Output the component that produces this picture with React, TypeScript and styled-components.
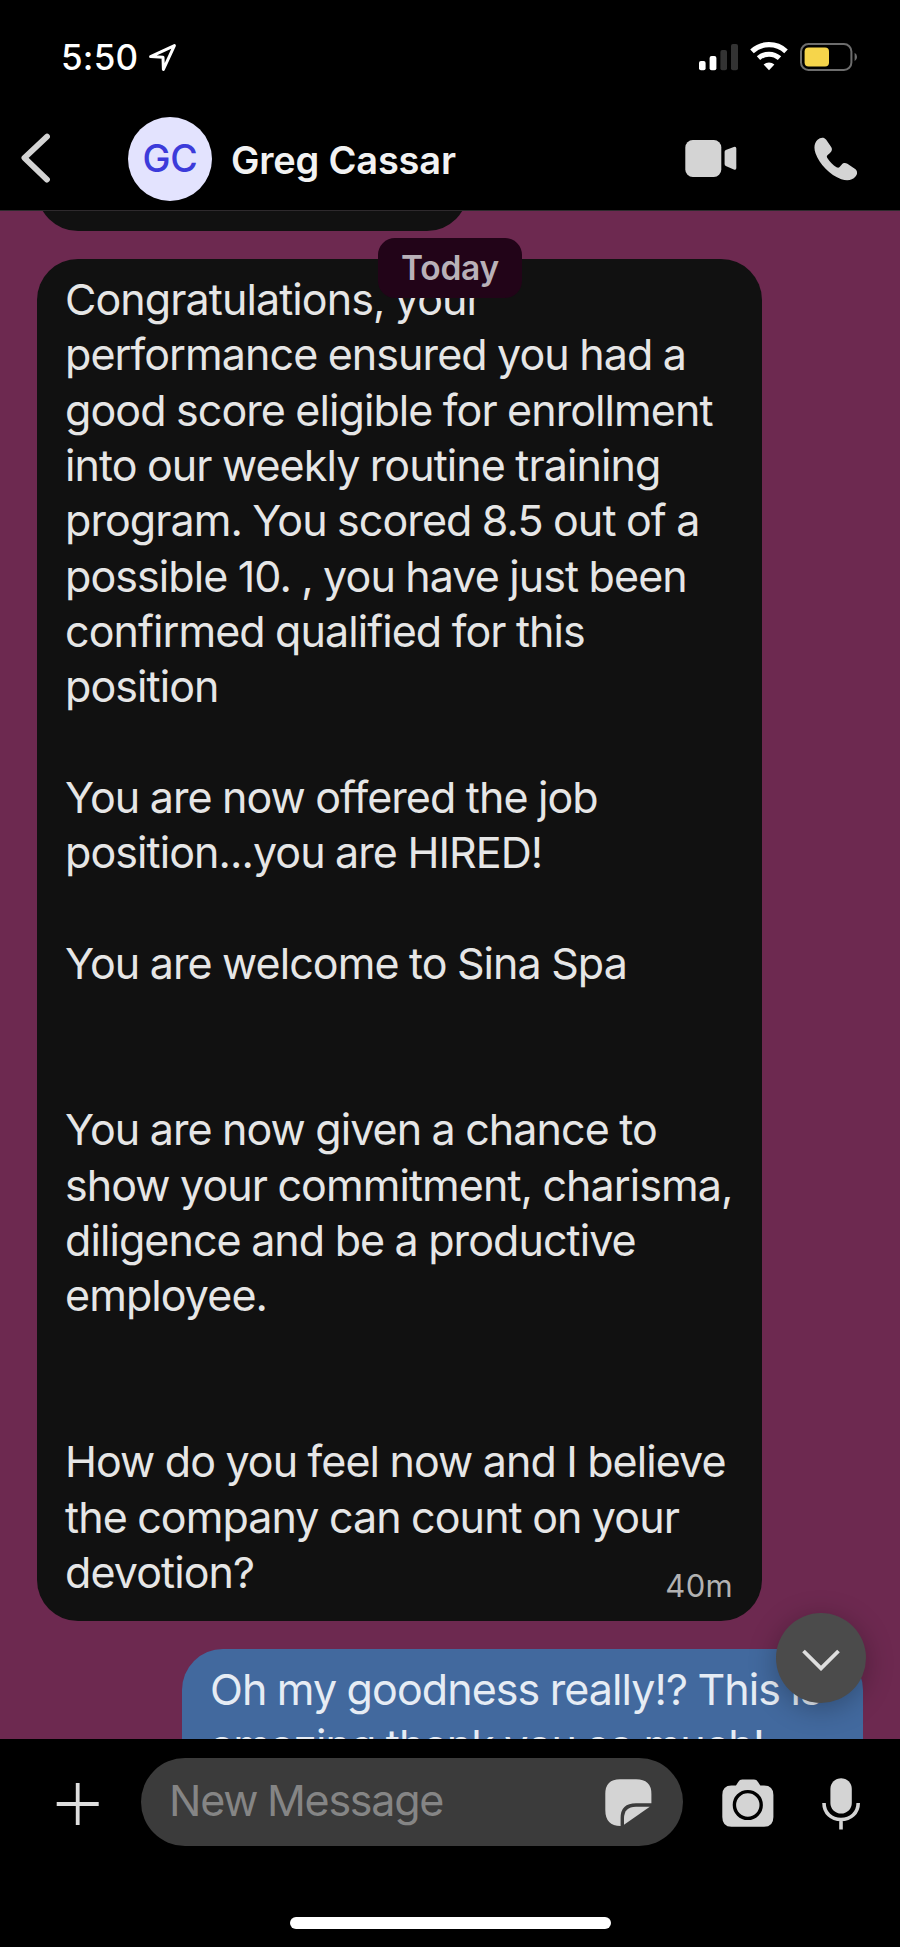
import React from "react";
import styled, { createGlobalStyle } from "styled-components";

const Global = createGlobalStyle`
  * { box-sizing: border-box; }
  body { margin: 0; background: #000; font-family: Inter, "Liberation Sans", sans-serif; }
  svg { display: block; flex: none; }
`;

const Screen = styled.main`
  display: flex;
  flex-direction: column;
  width: 900px;
  height: 1947px;
  overflow: hidden;
  background: #000;
`;

const Header = styled.header`
  height: 211px;
  flex: none;
  border-bottom: 1px solid #2e2a2d;
`;

const StatusBar = styled.div`
  display: flex;
  align-items: flex-start;
  height: 106px;
  padding: 36px 41px 0 61px;
`;

const Clock = styled.span`
  width: 87px;
  font-size: 35px;
  line-height: 42px;
  font-weight: 500;
  letter-spacing: 0.2px;
  color: #fff;
  white-space: nowrap;
`;

const StatusIcons = styled.div`
  display: flex;
  gap: 12px;
  margin-left: auto;
  padding-top: 4px;
`;

const NavBar = styled.div`
  display: flex;
  align-items: center;
  height: 106px;
  padding: 0 42px 0 18px;
`;

const Avatar = styled.div`
  display: grid;
  place-items: center;
  width: 84px;
  height: 84px;
  margin-left: 74px;
  border-radius: 50%;
  background: #e3e3fe;
  color: #3c3bda;
  font-size: 37.5px;
  line-height: 44px;
  font-weight: 450;
  letter-spacing: -0.3px;
`;

const ContactName = styled.h1`
  margin: 2px 0 0 19px;
  font-size: 38px;
  line-height: 46px;
  font-weight: 600;
  letter-spacing: -0.2px;
  color: #f2f2f2;
  white-space: nowrap;
`;

const CallActions = styled.div`
  display: flex;
  align-items: center;
  gap: 77px;
  margin-left: auto;
`;

const Thread = styled.section`
  position: relative;
  display: flex;
  flex-direction: column;
  flex: 1;
  gap: 28px;
  padding: 0 37px;
  overflow: hidden;
  background: #6d2950;
`;

const Bubble = styled.article<{ $sent?: boolean }>`
  position: relative;
  flex: none;
  align-self: ${(p) => (p.$sent ? "flex-end" : "flex-start")};
  width: ${(p) => (p.$sent ? "681px" : "725px")};
  padding: 13px 28px ${(p) => (p.$sent ? "12px" : "21px")} 28px;
  border-radius: 41px;
  background: ${(p) => (p.$sent ? "#42699e" : "#111")};
  color: ${(p) => (p.$sent ? "#e6ecf4" : "#e6e6e6")};
`;

const EarlierBubble = styled(Bubble)`
  width: 431px;
  height: 100px;
  margin-top: -80px;
`;

const MessageText = styled.p`
  margin: 0;
  font-size: 43px;
  line-height: 55.35px;
  letter-spacing: -0.92px;
  word-spacing: -0.8px;
  white-space: pre;
`;

const Timestamp = styled.time`
  position: absolute;
  right: 29px;
  bottom: 16px;
  font-size: 31px;
  line-height: 38px;
  letter-spacing: 0.3px;
  color: #b2b2b2;
`;

const DayBadge = styled.div`
  position: absolute;
  top: 27px;
  left: 378px;
  display: grid;
  place-items: center;
  width: 144px;
  height: 60px;
  border-radius: 17px;
  background: #220418;
  color: #b9b1b8;
  font-size: 33.5px;
  font-weight: 600;
  letter-spacing: -0.2px;
`;

const ScrollDown = styled.button`
  position: absolute;
  right: 34px;
  bottom: 36px;
  display: grid;
  place-items: center;
  width: 90px;
  height: 90px;
  padding: 4px 0 0;
  border: 0;
  border-radius: 50%;
  background: #4b4b4b;
  box-shadow: 0 5px 28px rgba(0, 0, 0, 0.28);
`;

const Composer = styled.footer`
  display: flex;
  flex-direction: column;
  align-items: center;
  flex: none;
  height: 208px;
  padding: 19px 40px 18px 56px;
`;

const ComposerRow = styled.div`
  display: flex;
  align-items: center;
  width: 100%;
  height: 88px;
`;

const Field = styled.div`
  display: flex;
  align-items: center;
  justify-content: space-between;
  width: 542px;
  height: 88px;
  margin: 0 39px 0 42px;
  padding: 0 31px 0 28px;
  border-radius: 44px;
  background: #3b3b3b;
`;

const Placeholder = styled.span`
  padding-bottom: 4px;
  font-size: 43px;
  line-height: 52px;
  letter-spacing: -1.25px;
  word-spacing: -1px;
  color: #858585;
  white-space: nowrap;
`;

const Shortcuts = styled.div`
  display: flex;
  align-items: center;
  gap: 48px;
  padding-top: 3px;
`;

const HomeIndicator = styled.div`
  width: 321px;
  height: 12px;
  margin: auto 15px 0 0;
  border-radius: 6px;
  background: #fff;
`;

const ICON = "#d4d4d4";

const LocationIcon = () => (
  <svg width="30" height="38" viewBox="0 0 30 38" fill="none">
    <path d="M2.6 20.6 26.4 9.6 15.4 33.4 15 21.2Z" stroke="#fff" strokeWidth="3" strokeLinejoin="round" />
  </svg>
);

const SignalIcon = () => (
  <svg width="39" height="32" viewBox="0 0 39 32">
    <rect x="0" y="21" width="6.6" height="9.2" rx="2" fill="#fff" />
    <rect x="10.6" y="16" width="6.8" height="14.2" rx="2" fill="#fff" />
    <rect x="21.4" y="10" width="6.6" height="20.2" rx="2" fill="#333" />
    <rect x="32" y="4" width="7" height="26.2" rx="2" fill="#333" />
  </svg>
);

const WifiIcon = () => (
  <svg width="38" height="32" viewBox="0 0 38 32" fill="none">
    <path d="M2 11.3a25 25 0 0 1 34 0" stroke="#fff" strokeWidth="5.2" />
    <path d="M8.5 18.2a15.6 15.6 0 0 1 21 0" stroke="#fff" strokeWidth="5" />
    <path d="M19 30.2 13.6 24.6a8.2 8.2 0 0 1 10.8 0Z" fill="#fff" />
  </svg>
);

const BatteryIcon = () => (
  <svg width="59" height="32" viewBox="0 0 59 32">
    <rect x="1" y="4" width="50.4" height="26" rx="7.5" fill="none" stroke="#6d6d6d" strokeWidth="2" />
    <rect x="4.6" y="7.6" width="24.4" height="18.8" rx="4" fill="#f6d54b" />
    <path d="M54.6 12.8a4.8 4.8 0 0 1 0 8.4Z" fill="#6d6d6d" />
  </svg>
);

const BackIcon = () => (
  <svg width="36" height="52" viewBox="0 0 36 52" fill="none">
    <path d="M29 3.6 6.4 24.8 29 46.6" stroke={ICON} strokeWidth="5.8" strokeLinecap="round" strokeLinejoin="round" />
  </svg>
);

const VideoIcon = () => (
  <svg width="52" height="38" viewBox="0 0 52 38" fill={ICON}>
    <rect x="0.3" y="0" width="36" height="37" rx="7.5" />
    <path d="M39.6 12.1Q39.6 10.7 40.8 10.1L48.8 6.9Q51.3 6 51.3 8.5V28.1Q51.3 30.5 48.8 29.5L40.8 26.1Q39.6 25.5 39.6 24.1Z" />
  </svg>
);

const PhoneIcon = () => (
  <svg width="44" height="44" viewBox="0 0 44 44" fill={ICON}>
    <path d="M3.6 2.7C6.4.2 10.2-.1 12.2 2.8L17 9.7C18.6 12 18 14.3 16 16L13.4 18.2C12.6 19 12.7 20 13.3 21C15.8 25 19 28.2 22.5 30.3C23.8 31 24.8 30.9 25.6 30L27.8 27.4C29.3 25.6 31.5 25.5 33.4 26.8L40.8 31.8C43.6 33.8 43.8 36.8 41.5 39.5C38.2 43.4 33.4 44.4 27.3 42.2C15.8 38 5.6 27.4 1.6 16.5C-.5 10.7.3 5.8 3.6 2.7Z" />
  </svg>
);

const ChevronIcon = () => (
  <svg width="38" height="22" viewBox="0 0 38 22" fill="none">
    <path d="M1.5 2 19 19.4 36.5 2" stroke="#dedede" strokeWidth="3.8" />
  </svg>
);

const PlusIcon = () => (
  <svg width="43" height="47" viewBox="0 0 43 47" fill="none">
    <path d="M21.7 4v42M.7 25h42" stroke="#dedede" strokeWidth="3.8" />
  </svg>
);

const StickerIcon = () => (
  <svg width="47" height="47" viewBox="0 0 47 47" fill={ICON}>
    <path d="M15 0.3H31Q46.4.3 46.4 15V24.3H31Q15.6 24.3 15.6 39V46.9Q.3 46.9.3 31V15Q.3.3 15 .3Z" />
    <path d="M44.8 27.7 19 45.7V39.5Q19 27.7 31 27.7Z" />
  </svg>
);

const CameraIcon = () => (
  <svg width="52" height="49" viewBox="0 0 52 49">
    <path d="M9.5 6.5H14L16.2 3Q17.6.6 20.3.6H32Q34.6.6 36 3L38.3 6.5H42Q51.4 6.5 51.4 16V38Q51.4 47.8 42 47.8H9.5Q.3 47.8.3 38V16Q.3 6.5 9.5 6.5Z" fill={ICON} />
    <circle cx="25.8" cy="26" r="13.4" fill="none" stroke="#000" strokeWidth="3.4" />
  </svg>
);

const MicIcon = () => (
  <svg width="38" height="52" viewBox="0 0 38 52" fill="none">
    <rect x="8.4" y="0.2" width="21.4" height="35.4" rx="10.7" fill={ICON} />
    <path d="M2 25C2 35 9.4 41.5 19 41.5S36.2 35 36.2 25M19 41.5V51.5" stroke={ICON} strokeWidth="3.6" />
  </svg>
);

const OFFER = `Congratulations, your
performance ensured you had a
good score eligible for enrollment
into our weekly routine training
program. You scored 8.5 out of a
possible 10. , you have just been
confirmed qualified for this
position

You are now offered the job
position...you are HIRED!

You are welcome to Sina Spa


You are now given a chance to
show your commitment, charisma,
diligence and be a productive
employee.


How do you feel now and I believe
the company can count on your
devotion?`;

const REPLY = `Oh my goodness really!? This is
amazing thank you so much!`;

export default function App() {
  return (
    <Screen>
      <Global />
      <Header>
        <StatusBar>
          <Clock>5:50</Clock>
          <LocationIcon />
          <StatusIcons>
            <SignalIcon />
            <WifiIcon />
            <BatteryIcon />
          </StatusIcons>
        </StatusBar>
        <NavBar>
          <BackIcon />
          <Avatar>GC</Avatar>
          <ContactName>Greg Cassar</ContactName>
          <CallActions>
            <VideoIcon />
            <PhoneIcon />
          </CallActions>
        </NavBar>
      </Header>
      <Thread>
        <EarlierBubble />
        <Bubble>
          <MessageText>{OFFER}</MessageText>
          <Timestamp>40m</Timestamp>
        </Bubble>
        <Bubble $sent>
          <MessageText>{REPLY}</MessageText>
        </Bubble>
        <DayBadge>Today</DayBadge>
        <ScrollDown aria-label="Scroll to latest">
          <ChevronIcon />
        </ScrollDown>
      </Thread>
      <Composer>
        <ComposerRow>
          <PlusIcon />
          <Field>
            <Placeholder>New Message</Placeholder>
            <StickerIcon />
          </Field>
          <Shortcuts>
            <CameraIcon />
            <MicIcon />
          </Shortcuts>
        </ComposerRow>
        <HomeIndicator />
      </Composer>
    </Screen>
  );
}
